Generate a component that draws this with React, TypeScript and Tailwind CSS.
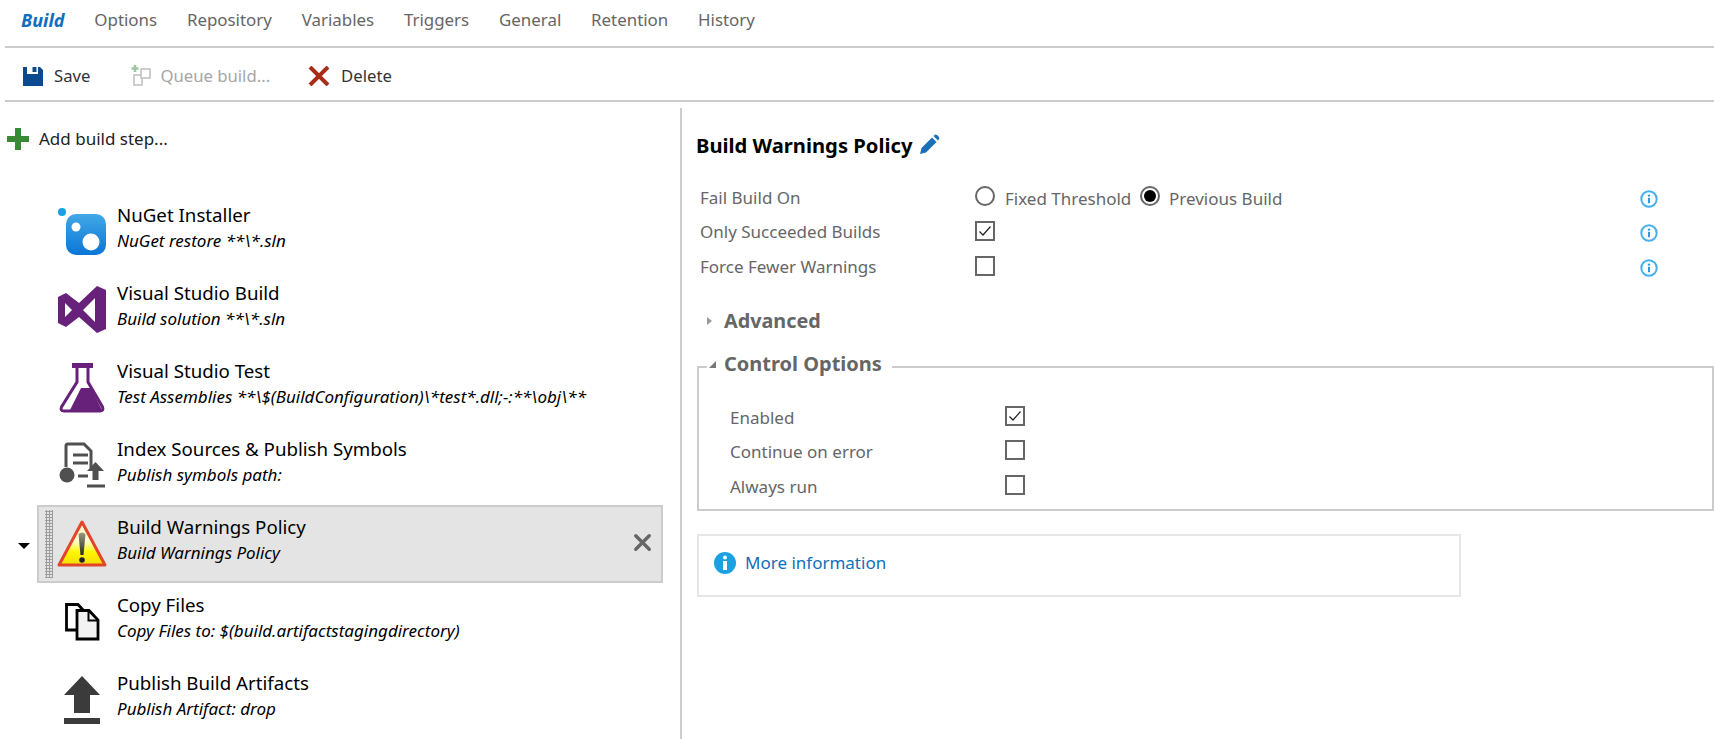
import { ReactNode } from "react";
import { X } from "lucide-react";

const tabs = ["Options", "Repository", "Variables", "Triggers", "General", "Retention", "History"];

function NuGetIcon() {
  return (
    <svg width="64" height="78" viewBox="0 0 64 78">
      <defs>
        <linearGradient id="nuget" x1="0" y1="0" x2="0" y2="1">
          <stop offset="0" stopColor="#42a8e6" />
          <stop offset="1" stopColor="#0a76d6" />
        </linearGradient>
      </defs>
      <circle cx="12" cy="23" r="4" fill="#1ba1e2" />
      <rect x="16" y="25" width="40" height="41" rx="10" fill="url(#nuget)" />
      <circle cx="26" cy="38" r="4.5" fill="#fff" />
      <circle cx="41" cy="53" r="8.5" fill="#fff" />
    </svg>
  );
}

function VsIcon() {
  return (
    <svg width="64" height="78" viewBox="0 0 64 78">
      <path
        fillRule="evenodd"
        fill="#68217a"
        d="M47 19 L56 23 V62 L47 66 L29 50 L16 60 L8 56 V30 L16 26 L29 36 Z M45 31 L33 43 L45 55 Z M15 36 V50 L22 43 Z"
      />
    </svg>
  );
}

function FlaskIcon() {
  return (
    <svg width="64" height="78" viewBox="0 0 64 78">
      <rect x="22" y="18" width="21" height="5" fill="#68217a" />
      <path
        d="M27 22 V37 L11.5 62 Q10 66 14 66 H50 Q54 66 52.5 62 L38 37 V22"
        fill="none"
        stroke="#68217a"
        strokeWidth="3"
      />
      <path d="M31 43 H41 L52 65 H20 Z" fill="#68217a" />
    </svg>
  );
}

function SymbolsIcon() {
  return (
    <svg width="64" height="78" viewBox="0 0 64 78">
      <path d="M16 44 V23 Q16 21 18 21 H34 L41 28 V45" fill="none" stroke="#505050" strokeWidth="3" />
      <path d="M23 32 H38 M23 40 H38" stroke="#505050" strokeWidth="3" />
      <circle cx="17" cy="52" r="7.5" fill="#505050" />
      <path d="M28 53 H38" stroke="#505050" strokeWidth="3" />
      <path d="M45.5 39 L54 48 H48.5 V57 H42.5 V48 H37 Z" fill="#505050" />
      <path d="M37 63 H55" stroke="#505050" strokeWidth="3" />
    </svg>
  );
}

function WarningIcon() {
  return (
    <svg width="64" height="78" viewBox="0 0 64 78">
      <defs>
        <linearGradient id="warn" x1="0" y1="0" x2="0" y2="1">
          <stop offset="0" stopColor="#fff6c8" />
          <stop offset="0.45" stopColor="#fffbd0" />
          <stop offset="0.7" stopColor="#fff700" />
          <stop offset="1" stopColor="#f4dc00" />
        </linearGradient>
        <linearGradient id="mark" x1="0" y1="0" x2="0" y2="1">
          <stop offset="0" stopColor="#9a9a80" />
          <stop offset="1" stopColor="#2a2a20" />
        </linearGradient>
      </defs>
      <path d="M32 21 L55 64 H9 Z" fill="url(#warn)" stroke="#e2452b" strokeWidth="3" strokeLinejoin="round" />
      <path d="M28.5 33 Q32 30 35.5 33 L33.5 54 H30.5 Z" fill="url(#mark)" />
      <circle cx="32" cy="59" r="2.8" fill="#222" />
    </svg>
  );
}

function CopyIcon() {
  return (
    <svg width="64" height="78" viewBox="0 0 64 78">
      <path d="M26 51 H16.5 V25.5 H28 L34 32" fill="none" stroke="#000" strokeWidth="2.8" />
      <path d="M27 31.5 H39 L48 41 V60 H27 Z" fill="#f2f2f2" stroke="#000" strokeWidth="2.8" />
      <path d="M38.5 32 V41.5 H48" fill="none" stroke="#000" strokeWidth="2" />
    </svg>
  );
}

function PublishIcon() {
  return (
    <svg width="64" height="78" viewBox="0 0 64 78">
      <path d="M32 19 L50 38 H40 V56 H24 V38 H14 Z" fill="#3b3b3b" />
      <rect x="14" y="61" width="36" height="6" fill="#3b3b3b" />
    </svg>
  );
}

function Step({ title, sub, icon }: { title: string; sub: string; icon: ReactNode }) {
  return (
    <div className="flex h-[78px] pl-[13px]">
      <div className="w-[64px] shrink-0 mr-[3px]">{icon}</div>
      <div className="pt-[13px] text-black">
        <div className="text-[18.7px] leading-[26px]">{title}</div>
        <div className="text-[17px] leading-[26px] italic">{sub}</div>
      </div>
    </div>
  );
}

function SelectedStep() {
  return (
    <div className="relative flex h-[78px] mt-1 -mb-1 border-2 border-[#cccccc] bg-[#e4e4e4] pl-[11px]">
      <div className="absolute left-[6px] top-[3px] bottom-[3px] w-[8px] bg-[radial-gradient(#9c9c9c_1.2px,transparent_1.3px)] bg-[length:3px_3px]" />
      <div className="w-[64px] shrink-0 mr-[3px] -mt-[6px] h-[78px]">
        <WarningIcon />
      </div>
      <div className="-mt-[6px] pt-[13px] text-black">
        <div className="text-[18.7px] leading-[26px]">Build Warnings Policy</div>
        <div className="text-[17px] leading-[26px] italic">Build Warnings Policy</div>
      </div>
      <X className="absolute right-[5px] top-[22px] size-[27px] text-[#666666]" strokeWidth={3} />
    </div>
  );
}

function InfoDot() {
  return (
    <svg width="18" height="18" viewBox="0 0 18 18">
      <circle cx="9" cy="9" r="7.7" fill="none" stroke="#45b0ea" strokeWidth="2" />
      <circle cx="9" cy="5.6" r="1.2" fill="#2b9be0" />
      <rect x="8" y="7.8" width="2" height="5.4" fill="#2b9be0" />
    </svg>
  );
}

function CheckBox({ checked }: { checked?: boolean }) {
  return (
    <div className="w-5 h-5 border-2 border-[#666666] bg-white flex items-center justify-center">
      {checked && (
        <svg width="14" height="14" viewBox="0 0 14 14">
          <path d="M1.5 7.5 L5 11 L12.5 2.5" fill="none" stroke="#222222" strokeWidth="1.2" />
        </svg>
      )}
    </div>
  );
}

function Radio({ checked }: { checked?: boolean }) {
  return (
    <div className="w-5 h-5 rounded-full border-2 border-[#666666] bg-white flex items-center justify-center">
      {checked && <div className="w-3 h-3 rounded-full bg-black" />}
    </div>
  );
}

export default function App() {
  return (
    <div className="h-[739px] w-[1714px] overflow-hidden bg-white font-['Noto_Sans',sans-serif]">
      {/* tabs */}
      <div className="ml-[5px] h-[48px] border-b-2 border-[#cccccc] flex items-start gap-[29.8px] pl-4 pt-[7px] text-[16.9px] leading-[26px] text-[#666666]">
        <span className="font-bold italic text-[18px] text-[#106ebe]">Build</span>
        {tabs.map((t) => (
          <span key={t}>{t}</span>
        ))}
      </div>

      {/* toolbar */}
      <div className="ml-[5px] h-[54px] border-b-2 border-[#cccccc] flex items-center pt-[4px] pl-[18px] text-[16.7px]">
        <svg width="20" height="19" viewBox="0 0 20 19" className="mr-[11px]">
          <path d="M0 0 H4 V7 H15 V0 H17 L20 3 V19 H0 Z" fill="#0b4a8f" />
          <rect x="9.5" y="0" width="4" height="5" fill="#0b4a8f" />
        </svg>
        <span className="text-[#333333]">Save</span>
        <svg width="21" height="22" viewBox="0 0 21 22" className="ml-[40px] mr-[9px]">
          <path d="M5 0 V7 M1.5 3.5 H8.5" stroke="#9fc79f" strokeWidth="2.6" />
          <rect x="4" y="10" width="8" height="10" fill="#fff" stroke="#c2c2c2" strokeWidth="1.6" />
          <rect x="11" y="4" width="9" height="9" fill="#fff" stroke="#c2c2c2" strokeWidth="1.6" />
        </svg>
        <span className="text-[#a6a6a6]">Queue build...</span>
        <svg width="22" height="20" viewBox="0 0 22 20" className="ml-[38px] mr-[11px]">
          <path d="M2 1 L20 19 M20 1 L2 19" stroke="#a82d18" strokeWidth="4" />
        </svg>
        <span className="text-[#333333]">Delete</span>
      </div>

      <div className="flex mt-[6px] h-[631px]">
        {/* steps */}
        <div className="w-[680px] shrink-0 relative">
          <div className="flex items-center h-[22px] mt-[20px] ml-[7px] gap-[10px] text-[17px] text-[#222222]">
            <svg width="22" height="22" viewBox="0 0 22 22">
              <path d="M8 0 H14 V8 H22 V14 H14 V22 H8 V14 H0 V8 H8 Z" fill="#3a8a35" />
            </svg>
            <span>Add build step...</span>
          </div>
          <div className="mt-[39px] ml-[37px] w-[626px]">
            <Step title="NuGet Installer" sub="NuGet restore **\*.sln" icon={<NuGetIcon />} />
            <Step title="Visual Studio Build" sub="Build solution **\*.sln" icon={<VsIcon />} />
            <Step
              title="Visual Studio Test"
              sub="Test Assemblies **\$(BuildConfiguration)\*test*.dll;-:**\obj\**"
              icon={<FlaskIcon />}
            />
            <Step title="Index Sources & Publish Symbols" sub="Publish symbols path:" icon={<SymbolsIcon />} />
            <SelectedStep />
            <Step
              title="Copy Files"
              sub="Copy Files to: $(build.artifactstagingdirectory)"
              icon={<CopyIcon />}
            />
            <Step title="Publish Build Artifacts" sub="Publish Artifact: drop" icon={<PublishIcon />} />
          </div>
          {/* drop marker */}
          <div className="absolute left-[18px] top-[435px] w-0 h-0 border-x-[6px] border-x-transparent border-t-[6px] border-t-black" />
        </div>

        {/* details */}
        <div className="flex-1 border-l-2 border-[#cccccc] pl-[14px]">
          <div className="flex items-center gap-[6px] mt-[23px] h-[28px] text-[20.2px] font-bold text-black">
            Build Warnings Policy
            <svg width="22" height="22" viewBox="0 0 22 22">
              <path d="M2 20 L3.5 14 L14 3.5 L18.5 8 L8 18.5 Z M15.5 2 L17 0.8 Q18 0.3 19 1 L21 3 Q21.7 4 21 5 L20 6.5 Z" fill="#1b6fb8" />
            </svg>
          </div>

          <div className="mt-[20px] text-[17px] text-[#666666]">
            <div className="flex items-center h-[34px] pl-[4px]">
              <span className="w-[275px] mt-[3px]">Fail Build On</span>
              <Radio />
              <span className="ml-[10px] mt-[6px] w-[135px] whitespace-nowrap">Fixed Threshold</span>
              <Radio checked />
              <span className="ml-[9px] mt-[6px]">Previous Build</span>
              <span className="ml-auto mr-[56px] mt-[6px]"><InfoDot /></span>
            </div>
            <div className="flex items-center h-[35px] pl-[4px]">
              <span className="w-[275px] mt-[3px]">Only Succeeded Builds</span>
              <CheckBox checked />
              <span className="ml-auto mr-[56px] mt-[4px]"><InfoDot /></span>
            </div>
            <div className="flex items-center h-[35px] pl-[4px]">
              <span className="w-[275px] mt-[3px]">Force Fewer Warnings</span>
              <CheckBox />
              <span className="ml-auto mr-[56px] mt-[4px]"><InfoDot /></span>
            </div>
          </div>

          <div className="flex items-center mt-[23px] h-[30px] pl-[11px] text-[19.8px] font-bold text-[#666666]">
            <div className="w-0 h-0 border-y-[4px] border-y-transparent border-l-[5px] border-l-[#999999] mr-[12px]" />
            Advanced
          </div>

          <div className="relative mt-[30px] ml-[1px] h-[145px] border-2 border-[#cccccc] pt-[30px] pl-[31px] text-[17px] text-[#666666]">
            <div className="absolute left-[8px] -top-[19px] h-[30px] bg-white flex items-center pr-[10px] text-[20px] font-bold">
              <div className="w-0 h-0 border-t-[7px] border-t-transparent border-r-[7px] border-r-[#777777] mr-[8px] ml-[2px]" />
              Control Options
            </div>
            <div className="flex items-center h-[35px]">
              <span className="w-[275px] mt-[4px]">Enabled</span>
              <CheckBox checked />
            </div>
            <div className="flex items-center h-[34px]">
              <span className="w-[275px] mt-[4px]">Continue on error</span>
              <CheckBox />
            </div>
            <div className="flex items-center h-[35px]">
              <span className="w-[275px] mt-[4px]">Always run</span>
              <CheckBox />
            </div>
          </div>

          <div className="mt-[23px] ml-[1px] w-[764px] h-[63px] border-2 border-[#e6e6e6] flex items-center pl-[15px] pb-[6px] gap-[9px] text-[17px] text-[#106ebe]">
            <svg width="22" height="22" viewBox="0 0 22 22">
              <circle cx="11" cy="11" r="11" fill="#1ba1e2" />
              <circle cx="11" cy="5.5" r="2" fill="#fff" />
              <rect x="9" y="9" width="4" height="9" fill="#fff" />
            </svg>
            More information
          </div>
        </div>
      </div>
    </div>
  );
}
